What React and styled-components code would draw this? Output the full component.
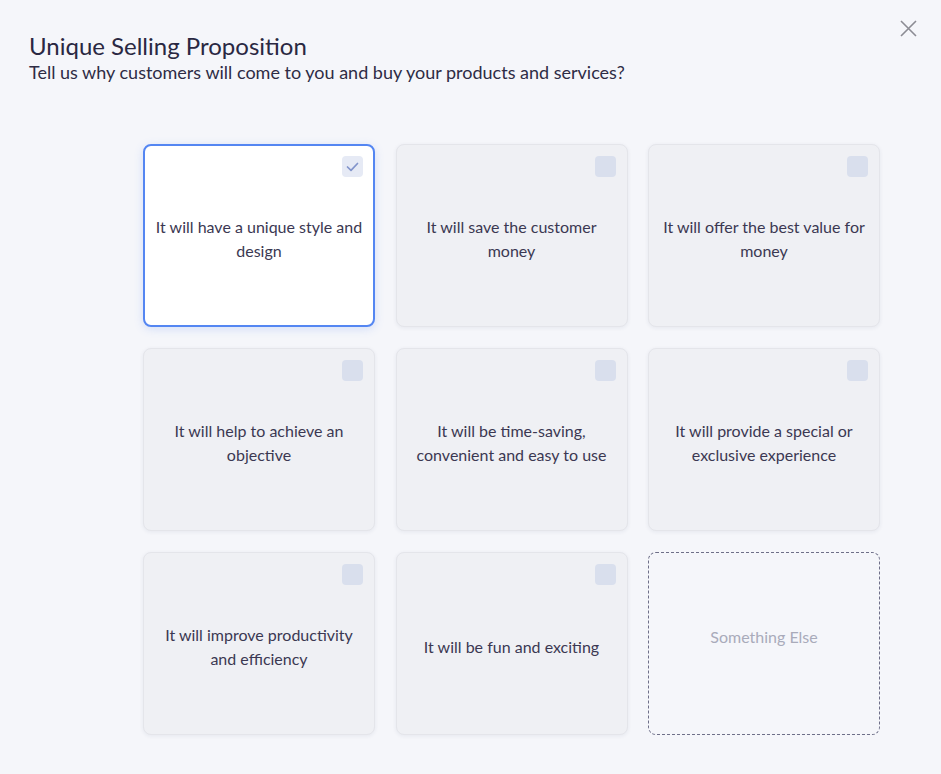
import { useState } from "react";
import styled, { createGlobalStyle } from "styled-components";

const GlobalStyle = createGlobalStyle`
  html, body {
    margin: 0;
    padding: 0;
    background: #f5f6fa;
  }
  body {
    font-family: Lato, "Open Sans", "Liberation Sans", sans-serif;
    color: #2c2a43;
  }
`;

const OPTIONS = [
  "It will have a unique style and design",
  "It will save the customer money",
  "It will offer the best value for money",
  "It will help to achieve an objective",
  "It will be time-saving, convenient and easy to use",
  "It will provide a special or exclusive experience",
  "It will improve productivity and efficiency",
  "It will be fun and exciting",
];

const Page = styled.div`
  position: relative;
  min-height: 774px;
  box-sizing: border-box;
  padding: 32px 61px 38px 29px;
`;

const Close = styled.button`
  position: absolute;
  top: 18px;
  right: 23px;
  width: 20px;
  height: 20px;
  padding: 0;
  border: none;
  background: none;
  cursor: pointer;
  display: flex;
  align-items: center;
  justify-content: center;
`;

const Title = styled.h1`
  margin: 0;
  font-size: 24px;
  font-weight: 400;
  line-height: 28px;
  color: #2a2842;
`;

const Subtitle = styled.p`
  margin: 0;
  font-size: 18px;
  line-height: 24px;
  color: #2e2c45;
`;

const Grid = styled.div`
  margin: 60px 0 0 114px;
  display: grid;
  grid-template-columns: repeat(3, 232px);
  grid-auto-rows: 183px;
  column-gap: 20.5px;
  row-gap: 21px;
`;

const Card = styled.div`
  position: relative;
  box-sizing: border-box;
  display: flex;
  align-items: center;
  justify-content: center;
  padding: 6px 10px 0;
  border-radius: 8px;
  text-align: center;
  font-size: 16px;
  line-height: 24px;
  color: #3b3852;
  cursor: pointer;
  background: ${(p) => (p.$selected ? "#ffffff" : "#eff0f4")};
  border: ${(p) => (p.$selected ? "2px solid #5486f2" : "1px solid #e4e5ea")};
  box-shadow: ${(p) =>
    p.$selected
      ? "0 2px 10px rgba(79, 130, 240, 0.2)"
      : "0 1px 4px rgba(30, 40, 80, 0.07)"};
`;

const Dashed = styled.div`
  box-sizing: border-box;
  display: flex;
  align-items: center;
  justify-content: center;
  padding-bottom: 15px;
  border-radius: 8px;
  border: 1.5px dashed #6e6f88;
  font-size: 16px;
  color: #a9abba;
  cursor: pointer;
`;

const Check = styled.span`
  position: absolute;
  top: ${(p) => (p.$on ? "10px" : "11px")};
  right: ${(p) => (p.$on ? "10px" : "11px")};
  width: 21px;
  height: 21px;
  border-radius: 4px;
  display: flex;
  align-items: center;
  justify-content: center;
  background: ${(p) => (p.$on ? "#e6eaf5" : "#d9dfed")};
`;

export default function App() {
  const [selected, setSelected] = useState([0]);

  const toggle = (i) =>
    setSelected((s) => (s.includes(i) ? s.filter((x) => x !== i) : [...s, i]));

  return (
    <>
      <GlobalStyle />
      <Page>
        <Close aria-label="Close">
          <svg width="17" height="17" viewBox="0 0 17 17">
            <path d="M1 1L16 16M16 1L1 16" stroke="#8c8c94" strokeWidth="1.6" />
          </svg>
        </Close>
        <Title>Unique Selling Proposition</Title>
        <Subtitle>
          Tell us why customers will come to you and buy your products and services?
        </Subtitle>
        <Grid>
          {OPTIONS.map((text, i) => {
            const on = selected.includes(i);
            return (
              <Card key={i} $selected={on} onClick={() => toggle(i)}>
                <Check $on={on}>
                  {on && (
                    <svg width="13" height="10" viewBox="0 0 13 10">
                      <path
                        d="M1.5 5L5 8.3L11.5 1.5"
                        fill="none"
                        stroke="#8294cb"
                        strokeWidth="1.7"
                        strokeLinecap="round"
                        strokeLinejoin="round"
                      />
                    </svg>
                  )}
                </Check>
                {text}
              </Card>
            );
          })}
          <Dashed>Something Else</Dashed>
        </Grid>
      </Page>
    </>
  );
}
